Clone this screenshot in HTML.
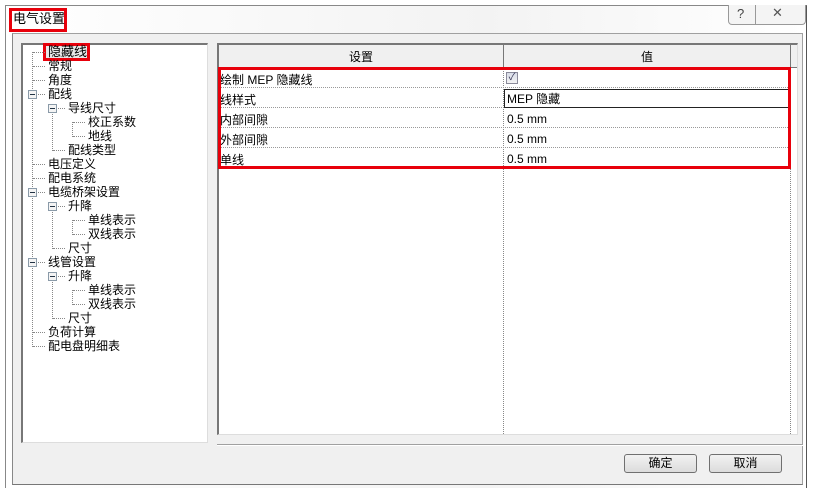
<!DOCTYPE html>
<html><head><meta charset="utf-8"><style>
*{margin:0;padding:0;box-sizing:border-box}
body{width:814px;height:495px;background:#fff;position:relative;overflow:hidden;font-family:"Liberation Sans","Noto Sans CJK SC",sans-serif;font-size:12px;color:#000}
.a{position:absolute}
.t{position:absolute;white-space:nowrap;line-height:14px;font-size:12px}
.dv{position:absolute;border-left:1px dotted #888}
.dh{position:absolute;border-top:1px dotted #888;height:0}
.pm{position:absolute;width:9px;height:9px;border:1px solid #8a9aa8;background:#f4f4f4}
.pm:after{content:"";position:absolute;left:1px;top:3px;width:5px;height:1px;background:#234}
.row{position:absolute;left:219px;width:571px;height:20px;border-bottom:1px dotted #999}
.row span{position:absolute;top:3px;font-size:12px;white-space:nowrap}
.btn{position:absolute;height:19px;border:1px solid #707070;border-radius:3px;background:linear-gradient(#f2f2f2,#dcdcdc);text-align:center;line-height:17px;font-size:12px}
</style></head><body>
<div class="a" style="left:5px;top:5px;width:802px;height:483px;border:1px solid #888;border-right-color:#555;border-bottom:none;background:linear-gradient(90deg,#fff,#f3f3f3 60%,#fff)"></div>
<div class="a" style="left:9px;top:8px;width:58px;height:24px;border:3px solid #e8000b"></div>
<div class="t" style="left:13px;top:12px;font-size:13px">电气设置</div>
<div class="a" style="left:728px;top:5px;width:78px;height:20px;border:1px solid #999;border-top:none;border-radius:0 0 4px 4px;background:#f4f4f4"></div>
<div class="a" style="left:755px;top:5px;width:1px;height:20px;background:#999"></div>
<div class="t" style="left:737px;top:7px;font-size:13px;color:#444">?</div>
<div class="t" style="left:772px;top:6px;font-size:13px;color:#555">✕</div>
<div class="a" style="left:12px;top:33px;width:791px;height:452px;background:#f0f0f0;border:1px solid #a0a0a0;border-left-color:#888;border-bottom-color:#777"></div>
<!-- tree -->
<div class="a" style="left:21px;top:43px;width:187px;height:400px;background:#fff;border:1px solid #ddd;border-left:2px solid #777;border-top:2px solid #777"></div>
<div class="a" style="left:43px;top:43px;width:47px;height:18px;border:3px solid #e8000b;background:#e8e8e8"></div>
<div class="dv" style="left:32px;top:52px;height:295px"></div>
<div class="dv" style="left:52px;top:108px;height:43px"></div>
<div class="dv" style="left:72px;top:122px;height:15px"></div>
<div class="dv" style="left:52px;top:206px;height:43px"></div>
<div class="dv" style="left:72px;top:220px;height:15px"></div>
<div class="dv" style="left:52px;top:276px;height:43px"></div>
<div class="dv" style="left:72px;top:290px;height:15px"></div>
<div class="dh" style="left:33px;top:52px;width:12px"></div>
<div class="dh" style="left:33px;top:66px;width:12px"></div>
<div class="dh" style="left:33px;top:80px;width:12px"></div>
<div class="dh" style="left:33px;top:94px;width:12px"></div>
<div class="dh" style="left:53px;top:108px;width:12px"></div>
<div class="dh" style="left:73px;top:122px;width:12px"></div>
<div class="dh" style="left:73px;top:136px;width:12px"></div>
<div class="dh" style="left:53px;top:150px;width:12px"></div>
<div class="dh" style="left:33px;top:164px;width:12px"></div>
<div class="dh" style="left:33px;top:178px;width:12px"></div>
<div class="dh" style="left:33px;top:192px;width:12px"></div>
<div class="dh" style="left:53px;top:206px;width:12px"></div>
<div class="dh" style="left:73px;top:220px;width:12px"></div>
<div class="dh" style="left:73px;top:234px;width:12px"></div>
<div class="dh" style="left:53px;top:248px;width:12px"></div>
<div class="dh" style="left:33px;top:262px;width:12px"></div>
<div class="dh" style="left:53px;top:276px;width:12px"></div>
<div class="dh" style="left:73px;top:290px;width:12px"></div>
<div class="dh" style="left:73px;top:304px;width:12px"></div>
<div class="dh" style="left:53px;top:318px;width:12px"></div>
<div class="dh" style="left:33px;top:332px;width:12px"></div>
<div class="dh" style="left:33px;top:346px;width:12px"></div>
<div class="pm" style="left:28px;top:90px"></div>
<div class="pm" style="left:48px;top:104px"></div>
<div class="pm" style="left:28px;top:188px"></div>
<div class="pm" style="left:48px;top:202px"></div>
<div class="pm" style="left:28px;top:258px"></div>
<div class="pm" style="left:48px;top:272px"></div>
<div class="t" style="left:48px;top:45px;font-size:13px">隐藏线</div>
<div class="t" style="left:48px;top:59px">常规</div>
<div class="t" style="left:48px;top:73px">角度</div>
<div class="t" style="left:48px;top:87px">配线</div>
<div class="t" style="left:68px;top:101px">导线尺寸</div>
<div class="t" style="left:88px;top:115px">校正系数</div>
<div class="t" style="left:88px;top:129px">地线</div>
<div class="t" style="left:68px;top:143px">配线类型</div>
<div class="t" style="left:48px;top:157px">电压定义</div>
<div class="t" style="left:48px;top:171px">配电系统</div>
<div class="t" style="left:48px;top:185px">电缆桥架设置</div>
<div class="t" style="left:68px;top:199px">升降</div>
<div class="t" style="left:88px;top:213px">单线表示</div>
<div class="t" style="left:88px;top:227px">双线表示</div>
<div class="t" style="left:68px;top:241px">尺寸</div>
<div class="t" style="left:48px;top:255px">线管设置</div>
<div class="t" style="left:68px;top:269px">升降</div>
<div class="t" style="left:88px;top:283px">单线表示</div>
<div class="t" style="left:88px;top:297px">双线表示</div>
<div class="t" style="left:68px;top:311px">尺寸</div>
<div class="t" style="left:48px;top:325px">负荷计算</div>
<div class="t" style="left:48px;top:339px">配电盘明细表</div>
<!-- grid -->
<div class="a" style="left:217px;top:43px;width:581px;height:392px;background:#fff;border:2px solid #777;border-right:1px solid #ddd;border-bottom:1px solid #ddd"></div>
<div class="a" style="left:219px;top:45px;width:578px;height:23px;background:#f0f0f0;border-bottom:1px solid #777"></div>
<div class="a" style="left:503px;top:45px;width:1px;height:23px;background:#777"></div>
<div class="a" style="left:790px;top:45px;width:1px;height:23px;background:#777"></div>
<div class="t" style="left:349px;top:50px">设置</div>
<div class="t" style="left:641px;top:50px">值</div>
<div class="dv" style="left:503px;top:68px;height:366px"></div>
<div class="dv" style="left:790px;top:68px;height:366px"></div>
<div class="row" style="top:68px"><span style="left:1px">绘制 MEP 隐藏线</span></div>
<div class="row" style="top:88px"><span style="left:1px">线样式</span></div>
<div class="row" style="top:108px"><span style="left:1px">内部间隙</span></div>
<div class="row" style="top:128px"><span style="left:1px">外部间隙</span></div>
<div class="row" style="top:148px"><span style="left:1px">单线</span></div>
<div class="a" style="left:506px;top:72px;width:12px;height:12px;border:1px solid #8a8a9a;background:linear-gradient(#d8dce8,#f4f4f4);color:#335;font-size:10px;line-height:10px;text-align:center">✓</div>
<div class="a" style="left:504px;top:89px;width:286px;height:19px;border:1px solid #222;background:#fff"></div>
<div class="t" style="left:507px;top:92px">MEP 隐藏</div>
<div class="t" style="left:507px;top:112px">0.5 mm</div>
<div class="t" style="left:507px;top:132px">0.5 mm</div>
<div class="t" style="left:507px;top:152px">0.5 mm</div>
<div class="a" style="left:218px;top:67px;width:573px;height:102px;border:3px solid #e8000b"></div>
<div class="a" style="left:217px;top:444px;width:586px;height:1px;background:#a0a0a0"></div>
<div class="a" style="left:217px;top:445px;width:586px;height:1px;background:#fff"></div>
<div class="btn" style="left:624px;top:454px;width:73px">确定</div>
<div class="btn" style="left:709px;top:454px;width:73px">取消</div>
</body></html>
